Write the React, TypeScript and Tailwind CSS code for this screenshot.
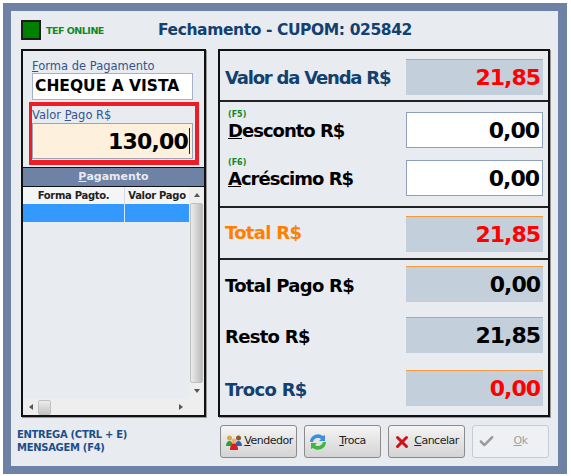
import { Check, X } from 'lucide-react';
import React from 'react';

const font = { fontFamily: '"DejaVu Sans", Tahoma, sans-serif' };

const ValueBox: React.FC<{ value: string; red?: boolean }> = ({ value, red }) => (
  <div
    className={`flex h-[36px] w-[137px] items-center justify-end border-t border-[#f59a3c] bg-[#c3d0dc] pr-[3px] text-[22px] font-bold tracking-[-1px] ${
      red ? 'text-[#ff0000]' : 'text-black'
    }`}
  >
    {value}
  </div>
);

const InputBox: React.FC<{ value: string }> = ({ value }) => (
  <div className="flex h-[36px] w-[137px] items-center justify-end border border-[#8fa0bd] bg-white pr-[3px] text-[22px] font-bold tracking-[-1px] text-black">
    {value}
  </div>
);

const Triangle: React.FC<{ dir: 'up' | 'down' | 'left' | 'right' }> = ({ dir }) => {
  const points = {
    up: '4,2 1,6 7,6',
    down: '1,2 7,2 4,6',
    left: '6,1 6,7 2,4',
    right: '2,1 2,7 6,4',
  }[dir];
  return (
    <svg width="8" height="8" viewBox="0 0 8 8">
      <polygon points={points} fill="#555" />
    </svg>
  );
};

const PeopleIcon = () => (
  <svg width="18" height="18" viewBox="0 0 18 18">
    <circle cx="4.500" cy="5" r="2.500" fill="#e8a33c" />
    <circle cx="13.500" cy="5" r="2.500" fill="#8a5a2c" />
    <path d="M1 13c0-3 1.500-5 3.500-5S8 10 8 13z" fill="#2f9a3c" />
    <path d="M10 13c0-3 1.500-5 3.500-5s3.500 2 3.500 5z" fill="#2f63b8" />
    <circle cx="9" cy="8" r="2.500" fill="#f0b070" />
    <path d="M5 17c0-4 1.500-6.500 4-6.500s4 2.500 4 6.500z" fill="#d81e1e" />
  </svg>
);

const SwapIcon = () => (
  <svg width="18" height="18" viewBox="0 0 18 18">
    <path d="M1 9a8 8 0 0 1 13-6l2-1v6h-6l2-2a5 5 0 0 0-8 3z" fill="#3c8fd8" />
    <path d="M17 9a8 8 0 0 1-13 6l-2 1v-6h6l-2 2a5 5 0 0 0 8-3z" fill="#3cb83c" />
  </svg>
);

const ActionButton: React.FC<{
  icon: React.ReactNode;
  mnemonic: string;
  rest: string;
  disabled?: boolean;
}> = ({ icon, mnemonic, rest, disabled }) => (
  <div
    className={`flex h-[33px] w-[77px] items-center rounded-[3px] border pl-[4px] text-[11px] tracking-[-0.500px] ${
      disabled
        ? 'border-[#c8ccd2] bg-[#eef0f3] text-[#a0a0a0]'
        : 'border-[#8b8b8b] bg-gradient-to-b from-[#f4f4f4] to-[#d4d4d4] text-[#222]'
    }`}
  >
    <span className="flex w-[18px] flex-none justify-center">{icon}</span>
    <span className="flex-1 pr-[2px] text-center">
      <span className="underline">{mnemonic}</span>
      {rest}
    </span>
  </div>
);

const App: React.FC = () => {
  return (
    <div className="h-[476px] w-[571px] overflow-hidden bg-white pt-[3px] pl-[3px]" style={font}>
      <div className="h-[471px] w-[564px] border-[8px] border-r-[9px] border-[#6e82a6] bg-[#e8ebf0]">
        <div className="flex h-[38px] items-center pl-[10px]">
          <div className="h-[20px] w-[20px] border-2 border-[#1c1c1c] bg-[#008000]" />
          <span className="mt-[2px] ml-[5px] w-[112px] text-[9.500px] font-bold tracking-[-0.500px] text-[#0e8a1e]">TEF ONLINE</span>
          <span className="mt-[2px] whitespace-nowrap text-[15.500px] font-bold tracking-[-0.400px] text-[#12406f]">
            Fechamento - CUPOM: 025842
          </span>
        </div>

        <div className="flex pl-[10px]">
          <div className="flex h-[368px] w-[185px] flex-col border-2 border-[#111] shadow-[1px_1px_0_#999]">
            <div className="pt-[8px] pl-[9px] text-[11.500px] leading-[14px] text-[#34558a]">
              <span className="underline">F</span>orma de Pagamento
            </div>
            <div className="ml-[9px] flex h-[27px] w-[161px] items-center border border-[#a5b2c8] bg-white pl-[2px] text-[15.500px] font-bold text-black">
              CHEQUE A VISTA
            </div>
            <div className="mt-[2px] ml-[6px] h-[63px] w-[170px] border-[4px] border-b-[5px] border-l-[3px] border-[#ee1c25] pt-[2px]">
              <div className="text-[11.500px] leading-[14px] text-[#34558a]">
                Valor <span className="underline">P</span>ago R$
              </div>
              <div className="mt-[1px] flex h-[36px] w-[161px] items-center justify-end border border-[#9aa5b8] bg-[#fdf0dc] pr-[2px] text-[22px] font-bold tracking-[-0.800px] text-black">
                130,00
                <span className="ml-[1px] h-[26px] w-[1px] bg-[#222]" />
              </div>
            </div>
            <div className="mt-[2px] flex h-[19px] items-center justify-center border-t border-[#111] bg-[#6e82a6] text-[11px] font-bold text-[#e8ebf0]">
              <span className="underline">P</span>agamento
            </div>
            <div className="flex min-h-0 flex-1 flex-col border-t border-[#111]">
              <div className="flex min-h-0 flex-1">
                <div className="flex-1">
                  <div className="flex h-[17px] bg-[#f4f5f7] text-[10px] font-bold tracking-[-0.300px] text-[#222]">
                    <div className="flex w-[102px] items-center justify-center border-r border-[#d8dce2]">Forma Pagto.</div>
                    <div className="flex flex-1 items-center justify-center">Valor Pago</div>
                  </div>
                  <div className="flex h-[18px] bg-[#3399ff]">
                    <div className="w-[102px] border-r border-[#d8e8f8]" />
                  </div>
                </div>
                <div className="flex w-[15px] flex-col items-center bg-[#eeeeee]">
                  <div className="my-[4px]">
                    <Triangle dir="up" />
                  </div>
                  <div className="w-[13px] flex-1 rounded-[2px] border border-[#c0c0c0] bg-gradient-to-r from-[#ececec] to-[#bcbcbc]" />
                  <div className="my-[4px]">
                    <Triangle dir="down" />
                  </div>
                </div>
              </div>
              <div className="flex h-[16px] items-center bg-[#eeeeee]">
                <div className="flex w-[15px] justify-center">
                  <Triangle dir="left" />
                </div>
                <div className="h-[15px] w-[13px] rounded-[2px] border border-[#c0c0c0] bg-gradient-to-b from-[#ececec] to-[#c4c4c4]" />
                <div className="flex-1" />
                <div className="mr-[19px]">
                  <Triangle dir="right" />
                </div>
              </div>
            </div>
          </div>

          <div className="ml-[12px] flex h-[368px] w-[332px] flex-col border-2 border-[#111] shadow-[1px_1px_0_#999]">
            <div className="flex h-[51px] items-center justify-between border-b-2 border-[#222] px-[5px] pt-[3px]">
              <span className="whitespace-nowrap text-[18px] font-bold tracking-[-1.200px] text-[#12406f]">Valor da Venda R$</span>
              <ValueBox value="21,85" red />
            </div>
            <div className="flex h-[106px] flex-col gap-[12px] border-b-2 border-[#222] pt-[10px] pr-[5px] pl-[8px]">
              <div className="flex h-[36px] items-center justify-between">
                <div className="mt-[-8px] text-[18px] leading-[22px] font-bold tracking-[-1px] text-black">
                  <div className="text-[8px] leading-[10px] tracking-normal text-[#0e8a1e]">(F5)</div>
                  <span className="underline">D</span>esconto R$
                </div>
                <InputBox value="0,00" />
              </div>
              <div className="flex h-[36px] items-center justify-between">
                <div className="mt-[-8px] text-[18px] leading-[22px] font-bold tracking-[-1px] text-black">
                  <div className="text-[8px] leading-[10px] tracking-normal text-[#0e8a1e]">(F6)</div>
                  <span className="underline">A</span>créscimo R$
                </div>
                <InputBox value="0,00" />
              </div>
            </div>
            <div className="flex h-[52px] items-center justify-between border-b-2 border-[#222] px-[5px] pt-[2px]">
              <span className="mt-[-3px] text-[18px] font-bold tracking-[-0.700px] text-[#ff8000]">Total R$</span>
              <ValueBox value="21,85" red />
            </div>
            <div className="flex flex-1 flex-col pt-[6px] pr-[5px] pl-[5px]">
              <div className="flex items-center justify-between">
                <span className="mt-[2px] text-[18px] font-bold tracking-[-0.700px] text-black">Total Pago R$</span>
                <ValueBox value="0,00" />
              </div>
              <div className="mt-[15px] flex items-center justify-between">
                <span className="mt-[3px] text-[18px] font-bold tracking-[-0.700px] text-black">Resto R$</span>
                <ValueBox value="21,85" />
              </div>
              <div className="mt-[17px] flex items-center justify-between">
                <span className="mt-[2px] text-[18px] font-bold tracking-[-0.700px] text-[#12406f]">Troco R$</span>
                <ValueBox value="0,00" red />
              </div>
            </div>
          </div>
        </div>

        <div className="mt-[8px] flex items-start">
          <div className="mt-[3px] ml-[6px] w-[203px] text-[10px] leading-[13px] font-bold tracking-[-0.300px] text-[#1c4f8a]">
            <div>ENTREGA (CTRL + E)</div>
            <div>MENSAGEM (F4)</div>
          </div>
          <div className="flex gap-[7px]">
            <ActionButton icon={<PeopleIcon />} mnemonic="V" rest="endedor" />
            <ActionButton icon={<SwapIcon />} mnemonic="T" rest="roca" />
            <ActionButton icon={<X size={18} strokeWidth={4} className="text-[#d01018]" />} mnemonic="C" rest="ancelar" />
            <ActionButton icon={<Check size={17} strokeWidth={3.500} className="text-[#9a9a9a]" />} mnemonic="O" rest="k" disabled />
          </div>
        </div>
      </div>
    </div>
  );
};

export default App;
